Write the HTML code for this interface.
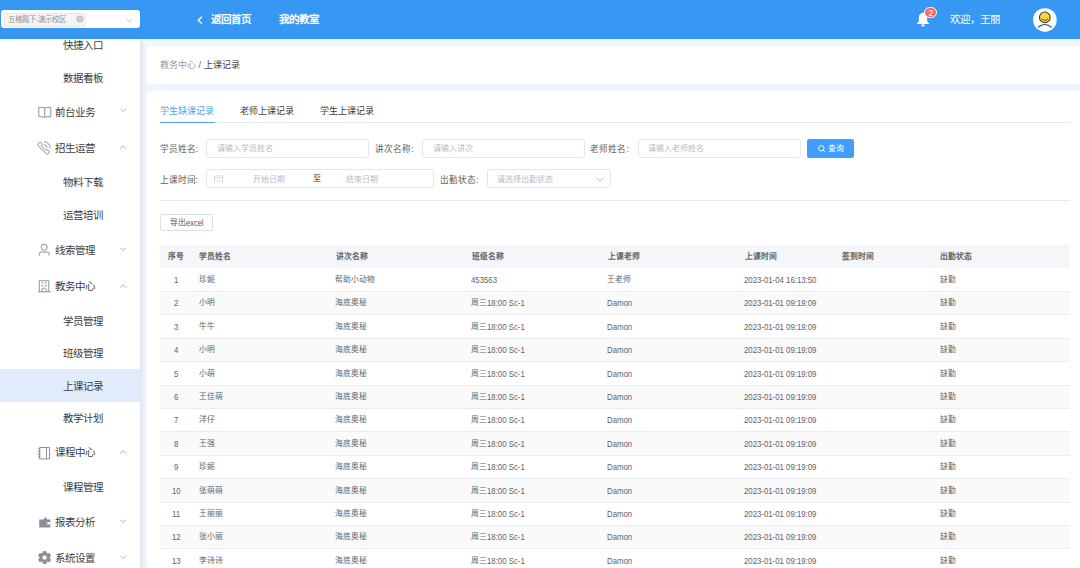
<!DOCTYPE html>
<html lang="zh-CN"><head><meta charset="utf-8">
<style>
*{box-sizing:border-box;margin:0;padding:0}
html,body{width:1080px;height:568px;overflow:hidden;background:#f0f6fd;font-family:"Liberation Sans",sans-serif;color:#333}
.abs{position:absolute;white-space:nowrap}
#hdr{position:absolute;left:0;top:0;width:1080px;height:39px;background:#3798f4}
#side{position:absolute;left:0;top:39px;width:140px;height:529px;background:#fff;box-shadow:1px 0 6px rgba(0,10,30,.11)}
.card{position:absolute;background:#fff;border-radius:3px}
.mi{position:absolute;font-size:10.5px;color:#3c3c3c;line-height:14px;white-space:nowrap}
.lbl{position:absolute;font-size:8.6px;color:#606060;line-height:12px;white-space:nowrap}
.inp{position:absolute;border:1px solid #e3e6ec;border-radius:3px;background:#fff}
.ph{position:absolute;font-size:8px;color:#b8bcc4;line-height:12px;white-space:nowrap}
.th{position:absolute;font-size:7.8px;line-height:12px;color:#666;font-weight:bold;white-space:nowrap}
.td{position:absolute;font-size:7.8px;line-height:12px;color:#606266;white-space:nowrap}
.L{display:inline-block;white-space:nowrap;vertical-align:top}
.L>span{display:inline-block;transform-origin:0 50%}
</style></head><body>
<div id="hdr">
  <div class="abs" style="left:1px;top:10px;width:139px;height:18px;background:#fff;border-radius:3px"></div>
  <div class="abs" style="left:4px;top:13px;width:81.5px;height:13.5px;background:#f4f4f5;border:1px solid #e9e9eb;border-radius:2px"></div>
  <div class="abs" style="left:8px;top:12.6px;font-size:7.5px;line-height:13px;color:#909399">五格殿下-演示校区</div>
  <svg class="abs" style="left:75.8px;top:14.9px" width="8" height="8" viewBox="0 0 8 8"><circle cx="4" cy="4" r="3.6" fill="#c3c6cc"/><path d="M2.8 2.8 L5.2 5.2 M5.2 2.8 L2.8 5.2" stroke="#e2e4e8" stroke-width=".6"/></svg>
<svg class="abs" style="left:125.5px;top:17.5px" width="7" height="4.5" viewBox="0 0 7 4.5" fill="none" stroke="#b8bcc4" stroke-width=".9"><path d="M0.6 0.8 L3.5 3.6 L6.4 0.8"/></svg>
  <svg class="abs" style="left:197px;top:15.5px" width="6" height="8.5" viewBox="0 0 6 8.5" fill="none" stroke="#fff" stroke-width="1.3"><path d="M4.8 0.8 L1.3 4.2 L4.8 7.6"/></svg>
  <div class="abs" style="left:211px;top:11.5px;font-size:10.5px;font-weight:bold;color:#fff;line-height:14px">返回首页</div>
  <div class="abs" style="left:279px;top:11.5px;font-size:10.5px;font-weight:bold;color:#fff;line-height:14px">我的教室</div>
  <div class="abs" style="left:950px;top:12px;font-size:10.5px;color:#fff;line-height:14px">欢迎，王丽</div>
  <svg class="abs" style="left:916px;top:11px" width="14" height="16" viewBox="0 0 14 16" fill="#fff">
<path d="M7 1.4 Q7.8 1.4 7.9 2.2 Q11.2 3 11.2 7 V10.6 L13.2 12.4 V13 H.8 V12.4 L2.8 10.6 V7 Q2.8 3 6.1 2.2 Q6.2 1.4 7 1.4 Z"/><path d="M5.2 13.6 H8.8 Q8.6 15.8 7 15.8 Q5.4 15.8 5.2 13.6 Z"/></svg>
<div class="abs" style="left:924.2px;top:6.6px;width:13.2px;height:11.8px;border-radius:6px;background:#f36a6a;border:.8px solid #fff;color:#fff;font-size:8.5px;line-height:10.4px;text-align:center">2</div>
<svg class="abs" style="left:1033px;top:7.5px" width="24" height="24" viewBox="0 0 24 24">
<circle cx="11.9" cy="11.95" r="11.8" fill="#fff"/>
<circle cx="11.8" cy="9.4" r="5.35" fill="#fbd438" stroke="#3d3d3d" stroke-width="1.1"/>
<path d="M8.6 10.6 Q11.8 14.2 15 10.6" fill="none" stroke="#4a4a3a" stroke-width="1"/>
<path d="M4.8 19.4 Q11.8 13.6 18.8 19.4" fill="none" stroke="#3d3d3d" stroke-width="1.2"/></svg>
</div>
<div id="side"></div>
<div class="abs" style="left:0;top:369px;width:140px;height:32.5px;background:#e0ebfc"></div>
<div class="mi" style="left:62.5px;top:38.3px">快捷入口</div>
<div class="mi" style="left:62.5px;top:70.9px">数据看板</div>
<div class="mi" style="left:55.4px;top:104.9px">前台业务</div>
<div class="mi" style="left:55.4px;top:141px">招生运营</div>
<div class="mi" style="left:62.5px;top:175px">物料下载</div>
<div class="mi" style="left:62.5px;top:208px">运营培训</div>
<div class="mi" style="left:55.4px;top:243px">线索管理</div>
<div class="mi" style="left:55.4px;top:279.4px">教务中心</div>
<div class="mi" style="left:62.5px;top:313.5px">学员管理</div>
<div class="mi" style="left:62.5px;top:346.3px">班级管理</div>
<div class="mi" style="left:62.5px;top:379px">上课记录</div>
<div class="mi" style="left:62.5px;top:411px">教学计划</div>
<div class="mi" style="left:55.4px;top:445px">课程中心</div>
<div class="mi" style="left:62.5px;top:480px">课程管理</div>
<div class="mi" style="left:55.4px;top:514.7px">报表分析</div>
<div class="mi" style="left:55.4px;top:551px">系统设置</div>
<!--SIDEICONS-->
<svg class="abs" style="left:37.5px;top:106px" width="14" height="12" viewBox="0 0 14 12" fill="none" stroke="#838c9b" stroke-width=".95">
<path d="M.8 1.3 Q3.8 1.3 6.8 1.9 Q9.8 1.3 12.8 1.3 V10.6 Q9.8 10.6 6.8 11.2 Q3.8 10.6 .8 10.6 Z M6.8 1.9 V11.2"/></svg>
<svg class="abs" style="left:37.3px;top:141px" width="14" height="14" viewBox="0 0 14 14" fill="none" stroke="#838c9b" stroke-width=".95" stroke-linejoin="round">
<path d="M1.6 2.2 L3.6 .9 L5.4 3.6 L4.2 4.6 L8.8 9.4 L9.8 8.4 L12.6 10.6 L11.4 12.6 Q10.6 13.4 9.4 12.8 L1.2 4.8 Q.6 3.2 1.6 2.2 Z"/>
<path d="M7 .8 Q12.8 1.2 13.3 7.2 M7 3.7 Q9.8 4 10.1 6.9"/></svg>
<svg class="abs" style="left:38px;top:243px" width="13" height="13" viewBox="0 0 13 13" fill="none" stroke="#838c9b" stroke-width=".95">
<circle cx="6.2" cy="4.2" r="3.05"/><path d="M1.3 12.6 V10.8 Q1.3 9.1 3 9.1 H9.4 Q11.1 9.1 11.1 10.8 V12.6"/></svg>
<svg class="abs" style="left:38px;top:279.5px" width="13" height="13" viewBox="0 0 13 13" fill="none" stroke="#838c9b" stroke-width=".95">
<path d="M1.3 11.8 V.8 H10.8 V11.8 M0 11.8 H12.6"/><path d="M3.4 3 H5.3 M6.9 3 H8.9 M3.4 5.8 H5.3 M6.9 5.8 H8.9" stroke-width="1"/>
<path d="M3.9 11.8 V10.2 Q3.9 8 6.2 8 Q8.5 8 8.5 10.2 V11.8"/></svg>
<svg class="abs" style="left:37px;top:445.5px" width="14" height="14" viewBox="0 0 14 14" fill="none" stroke="#838c9b" stroke-width=".95">
<path d="M2.6 1.5 H12.5 V12.9 H2.6 Z M9.5 1.5 V12.9 M.9 2.9 H3.6 M.9 5.7 H3.6 M.9 8.4 H3.6 M.9 11 H3.6"/></svg>
<svg class="abs" style="left:38.5px;top:515.5px" width="12" height="12" viewBox="0 0 12 12" fill="#8a8f99">
<path d="M.2 3.6 H4.6 L6.4 .8 L8.2 3.6 H11.4 V11.4 H.2 Z"/><rect x="7.6" y="6" width="4" height="2.6" fill="#fff"/><circle cx="8.7" cy="7.3" r=".7" fill="#8a8f99"/></svg>
<svg class="abs" style="left:37.7px;top:551.1px" width="13.2" height="13.2" viewBox="0 0 13.2 13.2" fill="#8a8f99"><path fill-rule="evenodd" stroke="#8a8f99" stroke-width=".6" stroke-linejoin="round" d="M11.51 7.55 L12.82 8.50 L11.35 11.03 L9.88 10.37 L8.23 11.33 L8.06 12.93 L5.14 12.93 L4.97 11.33 L3.32 10.37 L1.85 11.03 L0.38 8.50 L1.69 7.55 L1.69 5.65 L0.38 4.70 L1.85 2.17 L3.32 2.83 L4.97 1.87 L5.14 0.27 L8.06 0.27 L8.23 1.87 L9.88 2.83 L11.35 2.17 L12.82 4.70 L11.51 5.65 Z M9.10 6.60 A2.5 2.5 0 1 0 4.10 6.60 A2.5 2.5 0 1 0 9.10 6.60 Z"/></svg>
<svg class="abs" style="left:120.1px;top:108.3px" width="6.5" height="4.5" viewBox="0 0 6.5 4.5" fill="none" stroke="#a0a6b0" stroke-width=".9"><path d="M0.5 0.8 L3.2 3.5 L5.9 0.8"/></svg>
<svg class="abs" style="left:120.1px;top:145.3px" width="6.5" height="4.5" viewBox="0 0 6.5 4.5" fill="none" stroke="#a0a6b0" stroke-width=".9"><path d="M0.5 3.5 L3.2 0.8 L5.9 3.5"/></svg>
<svg class="abs" style="left:120.1px;top:247.3px" width="6.5" height="4.5" viewBox="0 0 6.5 4.5" fill="none" stroke="#a0a6b0" stroke-width=".9"><path d="M0.5 0.8 L3.2 3.5 L5.9 0.8"/></svg>
<svg class="abs" style="left:120.1px;top:284.2px" width="6.5" height="4.5" viewBox="0 0 6.5 4.5" fill="none" stroke="#a0a6b0" stroke-width=".9"><path d="M0.5 3.5 L3.2 0.8 L5.9 3.5"/></svg>
<svg class="abs" style="left:120.1px;top:449.8px" width="6.5" height="4.5" viewBox="0 0 6.5 4.5" fill="none" stroke="#a0a6b0" stroke-width=".9"><path d="M0.5 3.5 L3.2 0.8 L5.9 3.5"/></svg>
<svg class="abs" style="left:120.1px;top:519.0px" width="6.5" height="4.5" viewBox="0 0 6.5 4.5" fill="none" stroke="#a0a6b0" stroke-width=".9"><path d="M0.5 0.8 L3.2 3.5 L5.9 0.8"/></svg>
<svg class="abs" style="left:120.1px;top:555.3px" width="6.5" height="4.5" viewBox="0 0 6.5 4.5" fill="none" stroke="#a0a6b0" stroke-width=".9"><path d="M0.5 0.8 L3.2 3.5 L5.9 0.8"/></svg>
<div class="card" style="left:147px;top:45.5px;width:940px;height:38.5px"></div>
<div class="card" style="left:147px;top:90.5px;width:940px;height:500px"></div>
<div class="abs" style="left:160px;top:59px;font-size:9px;line-height:12px;color:#999">教务中心 <span style="color:#666">/</span> <span style="color:#444">上课记录</span></div>

<div class="abs" style="left:160px;top:105px;font-size:9px;line-height:12px;color:#4a9ff5">学生缺课记录</div>
<div class="abs" style="left:240px;top:105px;font-size:9px;line-height:12px;color:#3a3a3a">老师上课记录</div>
<div class="abs" style="left:320px;top:105px;font-size:9px;line-height:12px;color:#3a3a3a">学生上课记录</div>
<div class="abs" style="left:160px;top:122px;width:910px;height:1px;background:#e4e7ed"></div>
<div class="abs" style="left:160px;top:121.5px;width:54.5px;height:1.6px;background:#4fa3f7"></div>

<!--FORM-->
<div class="lbl" style="left:159.6px;top:142.8px">学员姓名:</div>
<div class="inp" style="left:206.2px;top:139.0px;width:162.8px;height:18.7px"></div>
<div class="ph" style="left:216.8px;top:143.2px">请输入学员姓名</div>
<div class="lbl" style="left:375.3px;top:142.8px">讲次名称:</div>
<div class="inp" style="left:422.0px;top:139.0px;width:162.8px;height:18.7px"></div>
<div class="ph" style="left:432.6px;top:143.2px">请输入讲次</div>
<div class="lbl" style="left:590.4px;top:142.8px">老师姓名:</div>
<div class="inp" style="left:637.7px;top:139.0px;width:163.2px;height:18.7px"></div>
<div class="ph" style="left:648.3px;top:143.2px">请输入老师姓名</div>
<div class="abs" style="left:807px;top:138.9px;width:47.3px;height:18.8px;background:#419ffc;border-radius:2.5px"></div>
<svg class="abs" style="left:817.6px;top:144.9px" width="7.5" height="7.5" viewBox="0 0 7.5 7.5" fill="none" stroke="#fff" stroke-width=".9"><circle cx="3.3" cy="3.3" r="2.7"/><path d="M5.2 5.2 L6.9 6.9"/></svg>
<div class="abs" style="left:828px;top:143.3px;font-size:7.9px;line-height:12px;color:#fff">查询</div>
<div class="lbl" style="left:159.6px;top:173.6px">上课时间:</div>
<div class="inp" style="left:206.4px;top:169.2px;width:227.6px;height:18.5px"></div>
<svg class="abs" style="left:214.2px;top:174.6px" width="9" height="8.6" viewBox="0 0 9 8.6" fill="none" stroke="#cfd3da" stroke-width=".85"><rect x=".5" y=".9" width="8" height="7.3" rx=".6"/><path d="M.5 2.8 H8.5 M2.4 5.9 H6.6"/></svg>
<div class="ph" style="left:252.7px;top:173.7px">开始日期</div>
<div class="abs" style="left:313.3px;top:173px;font-size:8px;line-height:12px;color:#333">至</div>
<div class="ph" style="left:345.8px;top:173.7px">结束日期</div>
<div class="lbl" style="left:440.0px;top:173.6px">出勤状态:</div>
<div class="inp" style="left:486.5px;top:169.2px;width:124.3px;height:18.7px"></div>
<div class="ph" style="left:497.2px;top:173.7px">请选择出勤状态</div>
<svg class="abs" style="left:595.5px;top:176.5px" width="8" height="5" viewBox="0 0 8 5" fill="none" stroke="#b8bcc4" stroke-width=".9"><path d="M.6 .8 L4 4 L7.4 .8"/></svg>
<div class="abs" style="left:160px;top:200px;width:909.5px;height:1px;background:#e8eaee"></div>
<div class="abs" style="left:160.2px;top:214.4px;width:53.1px;height:16.9px;border:1px solid #dcdfe6;border-radius:2px;background:#fff"></div>
<div class="abs" style="left:170px;top:217px;font-size:8px;line-height:12px;color:#555">导出<span class="L" style="width:17.5px"><span style="font-size:9px;transform:scaleX(.833)">excel</span></span></div>
<!--/FORM-->
<!--TABLE-->
<div class="abs" style="left:160px;top:245.0px;width:909.5px;height:23.0px;background:#f4f6fa"></div>
<div class="th" style="left:168.4px;top:250.5px">序号</div>
<div class="th" style="left:199.2px;top:250.5px">学员姓名</div>
<div class="th" style="left:335.7px;top:250.5px">讲次名称</div>
<div class="th" style="left:471.9px;top:250.5px">班级名称</div>
<div class="th" style="left:607.8px;top:250.5px">上课老师</div>
<div class="th" style="left:744.5px;top:250.5px">上课时间</div>
<div class="th" style="left:842.4px;top:250.5px">签到时间</div>
<div class="th" style="left:940px;top:250.5px">出勤状态</div>
<div class="abs" style="left:160px;top:268px;width:909.5px;height:23px;background:#fff"></div>
<div class="abs" style="left:160px;top:291px;width:909.5px;height:1px;background:#ebedf1"></div>
<div class="td" style="left:173.9px;top:273.90px"><span class="L" style="width:4.34px"><span style="font-size:8.8px;transform:scaleX(0.8864)">1</span></span></div>
<div class="td" style="left:198.7px;top:273.90px">珍妮</div>
<div class="td" style="left:335.2px;top:273.90px">帮助小动物</div>
<div class="td" style="left:471.4px;top:273.90px"><span class="L" style="width:26.03px"><span style="font-size:8.8px;transform:scaleX(0.8864)">453563</span></span></div>
<div class="td" style="left:607.3px;top:273.90px">王老师</div>
<div class="td" style="left:744.0px;top:273.90px"><span class="L" style="width:72.43px"><span style="font-size:8.8px;transform:scaleX(0.8864)">2023-01-04 16:13:50</span></span></div>
<div class="td" style="left:939.5px;top:273.90px">缺勤</div>
<div class="abs" style="left:160px;top:292px;width:909.5px;height:22px;background:#fafafa"></div>
<div class="abs" style="left:160px;top:314px;width:909.5px;height:1px;background:#ebedf1"></div>
<div class="td" style="left:173.9px;top:297.30px"><span class="L" style="width:4.34px"><span style="font-size:8.8px;transform:scaleX(0.8864)">2</span></span></div>
<div class="td" style="left:198.7px;top:297.30px">小明</div>
<div class="td" style="left:335.2px;top:297.30px">海底奥秘</div>
<div class="td" style="left:471.4px;top:297.30px">周三<span class="L" style="width:37.72px"><span style="font-size:8.8px;transform:scaleX(0.8864)">18:00 Sc-1</span></span></div>
<div class="td" style="left:607.3px;top:297.30px"><span class="L" style="width:25.14px"><span style="font-size:8.8px;transform:scaleX(0.8864)">Damon</span></span></div>
<div class="td" style="left:744.0px;top:297.30px"><span class="L" style="width:72.43px"><span style="font-size:8.8px;transform:scaleX(0.8864)">2023-01-01 09:19:09</span></span></div>
<div class="td" style="left:939.5px;top:297.30px">缺勤</div>
<div class="abs" style="left:160px;top:315px;width:909.5px;height:23px;background:#fff"></div>
<div class="abs" style="left:160px;top:338px;width:909.5px;height:1px;background:#ebedf1"></div>
<div class="td" style="left:173.9px;top:320.70px"><span class="L" style="width:4.34px"><span style="font-size:8.8px;transform:scaleX(0.8864)">3</span></span></div>
<div class="td" style="left:198.7px;top:320.70px">牛牛</div>
<div class="td" style="left:335.2px;top:320.70px">海底奥秘</div>
<div class="td" style="left:471.4px;top:320.70px">周三<span class="L" style="width:37.72px"><span style="font-size:8.8px;transform:scaleX(0.8864)">18:00 Sc-1</span></span></div>
<div class="td" style="left:607.3px;top:320.70px"><span class="L" style="width:25.14px"><span style="font-size:8.8px;transform:scaleX(0.8864)">Damon</span></span></div>
<div class="td" style="left:744.0px;top:320.70px"><span class="L" style="width:72.43px"><span style="font-size:8.8px;transform:scaleX(0.8864)">2023-01-01 09:19:09</span></span></div>
<div class="td" style="left:939.5px;top:320.70px">缺勤</div>
<div class="abs" style="left:160px;top:339px;width:909.5px;height:22px;background:#fafafa"></div>
<div class="abs" style="left:160px;top:361px;width:909.5px;height:1px;background:#ebedf1"></div>
<div class="td" style="left:173.9px;top:344.10px"><span class="L" style="width:4.34px"><span style="font-size:8.8px;transform:scaleX(0.8864)">4</span></span></div>
<div class="td" style="left:198.7px;top:344.10px">小明</div>
<div class="td" style="left:335.2px;top:344.10px">海底奥秘</div>
<div class="td" style="left:471.4px;top:344.10px">周三<span class="L" style="width:37.72px"><span style="font-size:8.8px;transform:scaleX(0.8864)">18:00 Sc-1</span></span></div>
<div class="td" style="left:607.3px;top:344.10px"><span class="L" style="width:25.14px"><span style="font-size:8.8px;transform:scaleX(0.8864)">Damon</span></span></div>
<div class="td" style="left:744.0px;top:344.10px"><span class="L" style="width:72.43px"><span style="font-size:8.8px;transform:scaleX(0.8864)">2023-01-01 09:19:09</span></span></div>
<div class="td" style="left:939.5px;top:344.10px">缺勤</div>
<div class="abs" style="left:160px;top:362px;width:909.5px;height:23px;background:#fff"></div>
<div class="abs" style="left:160px;top:385px;width:909.5px;height:1px;background:#ebedf1"></div>
<div class="td" style="left:173.9px;top:367.50px"><span class="L" style="width:4.34px"><span style="font-size:8.8px;transform:scaleX(0.8864)">5</span></span></div>
<div class="td" style="left:198.7px;top:367.50px">小萌</div>
<div class="td" style="left:335.2px;top:367.50px">海底奥秘</div>
<div class="td" style="left:471.4px;top:367.50px">周三<span class="L" style="width:37.72px"><span style="font-size:8.8px;transform:scaleX(0.8864)">18:00 Sc-1</span></span></div>
<div class="td" style="left:607.3px;top:367.50px"><span class="L" style="width:25.14px"><span style="font-size:8.8px;transform:scaleX(0.8864)">Damon</span></span></div>
<div class="td" style="left:744.0px;top:367.50px"><span class="L" style="width:72.43px"><span style="font-size:8.8px;transform:scaleX(0.8864)">2023-01-01 09:19:09</span></span></div>
<div class="td" style="left:939.5px;top:367.50px">缺勤</div>
<div class="abs" style="left:160px;top:386px;width:909.5px;height:22px;background:#fafafa"></div>
<div class="abs" style="left:160px;top:408px;width:909.5px;height:1px;background:#ebedf1"></div>
<div class="td" style="left:173.9px;top:390.90px"><span class="L" style="width:4.34px"><span style="font-size:8.8px;transform:scaleX(0.8864)">6</span></span></div>
<div class="td" style="left:198.7px;top:390.90px">王佳萌</div>
<div class="td" style="left:335.2px;top:390.90px">海底奥秘</div>
<div class="td" style="left:471.4px;top:390.90px">周三<span class="L" style="width:37.72px"><span style="font-size:8.8px;transform:scaleX(0.8864)">18:00 Sc-1</span></span></div>
<div class="td" style="left:607.3px;top:390.90px"><span class="L" style="width:25.14px"><span style="font-size:8.8px;transform:scaleX(0.8864)">Damon</span></span></div>
<div class="td" style="left:744.0px;top:390.90px"><span class="L" style="width:72.43px"><span style="font-size:8.8px;transform:scaleX(0.8864)">2023-01-01 09:19:09</span></span></div>
<div class="td" style="left:939.5px;top:390.90px">缺勤</div>
<div class="abs" style="left:160px;top:409px;width:909.5px;height:22px;background:#fff"></div>
<div class="abs" style="left:160px;top:431px;width:909.5px;height:1px;background:#ebedf1"></div>
<div class="td" style="left:173.9px;top:414.30px"><span class="L" style="width:4.34px"><span style="font-size:8.8px;transform:scaleX(0.8864)">7</span></span></div>
<div class="td" style="left:198.7px;top:414.30px">洋仔</div>
<div class="td" style="left:335.2px;top:414.30px">海底奥秘</div>
<div class="td" style="left:471.4px;top:414.30px">周三<span class="L" style="width:37.72px"><span style="font-size:8.8px;transform:scaleX(0.8864)">18:00 Sc-1</span></span></div>
<div class="td" style="left:607.3px;top:414.30px"><span class="L" style="width:25.14px"><span style="font-size:8.8px;transform:scaleX(0.8864)">Damon</span></span></div>
<div class="td" style="left:744.0px;top:414.30px"><span class="L" style="width:72.43px"><span style="font-size:8.8px;transform:scaleX(0.8864)">2023-01-01 09:19:09</span></span></div>
<div class="td" style="left:939.5px;top:414.30px">缺勤</div>
<div class="abs" style="left:160px;top:432px;width:909.5px;height:23px;background:#fafafa"></div>
<div class="abs" style="left:160px;top:455px;width:909.5px;height:1px;background:#ebedf1"></div>
<div class="td" style="left:173.9px;top:437.70px"><span class="L" style="width:4.34px"><span style="font-size:8.8px;transform:scaleX(0.8864)">8</span></span></div>
<div class="td" style="left:198.7px;top:437.70px">王强</div>
<div class="td" style="left:335.2px;top:437.70px">海底奥秘</div>
<div class="td" style="left:471.4px;top:437.70px">周三<span class="L" style="width:37.72px"><span style="font-size:8.8px;transform:scaleX(0.8864)">18:00 Sc-1</span></span></div>
<div class="td" style="left:607.3px;top:437.70px"><span class="L" style="width:25.14px"><span style="font-size:8.8px;transform:scaleX(0.8864)">Damon</span></span></div>
<div class="td" style="left:744.0px;top:437.70px"><span class="L" style="width:72.43px"><span style="font-size:8.8px;transform:scaleX(0.8864)">2023-01-01 09:19:09</span></span></div>
<div class="td" style="left:939.5px;top:437.70px">缺勤</div>
<div class="abs" style="left:160px;top:456px;width:909.5px;height:22px;background:#fff"></div>
<div class="abs" style="left:160px;top:478px;width:909.5px;height:1px;background:#ebedf1"></div>
<div class="td" style="left:173.9px;top:461.10px"><span class="L" style="width:4.34px"><span style="font-size:8.8px;transform:scaleX(0.8864)">9</span></span></div>
<div class="td" style="left:198.7px;top:461.10px">珍妮</div>
<div class="td" style="left:335.2px;top:461.10px">海底奥秘</div>
<div class="td" style="left:471.4px;top:461.10px">周三<span class="L" style="width:37.72px"><span style="font-size:8.8px;transform:scaleX(0.8864)">18:00 Sc-1</span></span></div>
<div class="td" style="left:607.3px;top:461.10px"><span class="L" style="width:25.14px"><span style="font-size:8.8px;transform:scaleX(0.8864)">Damon</span></span></div>
<div class="td" style="left:744.0px;top:461.10px"><span class="L" style="width:72.43px"><span style="font-size:8.8px;transform:scaleX(0.8864)">2023-01-01 09:19:09</span></span></div>
<div class="td" style="left:939.5px;top:461.10px">缺勤</div>
<div class="abs" style="left:160px;top:479px;width:909.5px;height:23px;background:#fafafa"></div>
<div class="abs" style="left:160px;top:502px;width:909.5px;height:1px;background:#ebedf1"></div>
<div class="td" style="left:171.8px;top:484.50px"><span class="L" style="width:8.68px"><span style="font-size:8.8px;transform:scaleX(0.8864)">10</span></span></div>
<div class="td" style="left:198.7px;top:484.50px">张萌萌</div>
<div class="td" style="left:335.2px;top:484.50px">海底奥秘</div>
<div class="td" style="left:471.4px;top:484.50px">周三<span class="L" style="width:37.72px"><span style="font-size:8.8px;transform:scaleX(0.8864)">18:00 Sc-1</span></span></div>
<div class="td" style="left:607.3px;top:484.50px"><span class="L" style="width:25.14px"><span style="font-size:8.8px;transform:scaleX(0.8864)">Damon</span></span></div>
<div class="td" style="left:744.0px;top:484.50px"><span class="L" style="width:72.43px"><span style="font-size:8.8px;transform:scaleX(0.8864)">2023-01-01 09:19:09</span></span></div>
<div class="td" style="left:939.5px;top:484.50px">缺勤</div>
<div class="abs" style="left:160px;top:503px;width:909.5px;height:22px;background:#fff"></div>
<div class="abs" style="left:160px;top:525px;width:909.5px;height:1px;background:#ebedf1"></div>
<div class="td" style="left:171.8px;top:507.90px"><span class="L" style="width:8.10px"><span style="font-size:8.8px;transform:scaleX(0.8864)">11</span></span></div>
<div class="td" style="left:198.7px;top:507.90px">王丽丽</div>
<div class="td" style="left:335.2px;top:507.90px">海底奥秘</div>
<div class="td" style="left:471.4px;top:507.90px">周三<span class="L" style="width:37.72px"><span style="font-size:8.8px;transform:scaleX(0.8864)">18:00 Sc-1</span></span></div>
<div class="td" style="left:607.3px;top:507.90px"><span class="L" style="width:25.14px"><span style="font-size:8.8px;transform:scaleX(0.8864)">Damon</span></span></div>
<div class="td" style="left:744.0px;top:507.90px"><span class="L" style="width:72.43px"><span style="font-size:8.8px;transform:scaleX(0.8864)">2023-01-01 09:19:09</span></span></div>
<div class="td" style="left:939.5px;top:507.90px">缺勤</div>
<div class="abs" style="left:160px;top:526px;width:909.5px;height:22px;background:#fafafa"></div>
<div class="abs" style="left:160px;top:548px;width:909.5px;height:1px;background:#ebedf1"></div>
<div class="td" style="left:171.8px;top:531.30px"><span class="L" style="width:8.68px"><span style="font-size:8.8px;transform:scaleX(0.8864)">12</span></span></div>
<div class="td" style="left:198.7px;top:531.30px">张小丽</div>
<div class="td" style="left:335.2px;top:531.30px">海底奥秘</div>
<div class="td" style="left:471.4px;top:531.30px">周三<span class="L" style="width:37.72px"><span style="font-size:8.8px;transform:scaleX(0.8864)">18:00 Sc-1</span></span></div>
<div class="td" style="left:607.3px;top:531.30px"><span class="L" style="width:25.14px"><span style="font-size:8.8px;transform:scaleX(0.8864)">Damon</span></span></div>
<div class="td" style="left:744.0px;top:531.30px"><span class="L" style="width:72.43px"><span style="font-size:8.8px;transform:scaleX(0.8864)">2023-01-01 09:19:09</span></span></div>
<div class="td" style="left:939.5px;top:531.30px">缺勤</div>
<div class="abs" style="left:160px;top:549px;width:909.5px;height:23px;background:#fff"></div>
<div class="abs" style="left:160px;top:572px;width:909.5px;height:1px;background:#ebedf1"></div>
<div class="td" style="left:171.8px;top:554.70px"><span class="L" style="width:8.68px"><span style="font-size:8.8px;transform:scaleX(0.8864)">13</span></span></div>
<div class="td" style="left:198.7px;top:554.70px">李诗诗</div>
<div class="td" style="left:335.2px;top:554.70px">海底奥秘</div>
<div class="td" style="left:471.4px;top:554.70px">周三<span class="L" style="width:37.72px"><span style="font-size:8.8px;transform:scaleX(0.8864)">18:00 Sc-1</span></span></div>
<div class="td" style="left:607.3px;top:554.70px"><span class="L" style="width:25.14px"><span style="font-size:8.8px;transform:scaleX(0.8864)">Damon</span></span></div>
<div class="td" style="left:744.0px;top:554.70px"><span class="L" style="width:72.43px"><span style="font-size:8.8px;transform:scaleX(0.8864)">2023-01-01 09:19:09</span></span></div>
<div class="td" style="left:939.5px;top:554.70px">缺勤</div>
<!--/TABLE-->
</body></html>
